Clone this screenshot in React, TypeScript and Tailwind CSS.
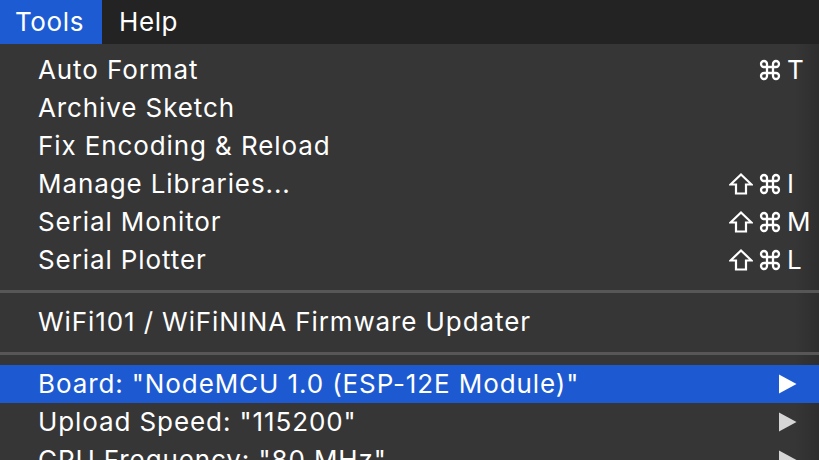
import React from 'react'
import { Command } from 'lucide-react'

type Item =
  | { kind: 'item'; label: string; shift?: boolean; cmd?: boolean; keyChar?: string; submenu?: boolean; active?: boolean }
  | { kind: 'sep' }

const items: Item[] = [
  { kind: 'item', label: 'Auto Format', cmd: true, keyChar: 'T' },
  { kind: 'item', label: 'Archive Sketch' },
  { kind: 'item', label: 'Fix Encoding & Reload' },
  { kind: 'item', label: 'Manage Libraries...', shift: true, cmd: true, keyChar: 'I' },
  { kind: 'item', label: 'Serial Monitor', shift: true, cmd: true, keyChar: 'M' },
  { kind: 'item', label: 'Serial Plotter', shift: true, cmd: true, keyChar: 'L' },
  { kind: 'sep' },
  { kind: 'item', label: 'WiFi101 / WiFiNINA Firmware Updater' },
  { kind: 'sep' },
  { kind: 'item', label: 'Board: "NodeMCU 1.0 (ESP-12E Module)"', submenu: true, active: true },
  { kind: 'item', label: 'Upload Speed: "115200"', submenu: true },
  { kind: 'item', label: 'CPU Frequency: "80 MHz"', submenu: true },
]

function Arrow({ active }: { active?: boolean }) {
  return (
    <svg width="18" height="20" viewBox="0 0 18 20" className="shrink-0">
      <polygon points="0,0.5 17.5,10 0,19.5" fill={active ? '#ffffff' : '#d6d6d6'} />
    </svg>
  )
}

function ShiftGlyph() {
  return (
    <svg width="24" height="22" viewBox="0 0 24 22" className="shrink-0">
      <polygon
        points="12,1.5 22.5,11.5 17,11.5 17,20.5 7,20.5 7,11.5 1.5,11.5"
        fill="none"
        stroke="currentColor"
        strokeWidth="2.2"
        strokeLinejoin="miter"
      />
    </svg>
  )
}

export default function App() {
  return (
    <div
      className="w-[819px] h-[460px] overflow-hidden bg-[#363636] text-white"
      style={{ fontFamily: 'Inter, "DejaVu Sans", sans-serif' }}
    >
      {/* Menu bar */}
      <div className="flex h-[44px] bg-[#232323] text-[26px] leading-none tracking-[0.6px]">
        <div className="flex items-center w-[102px] pl-[15px] bg-[#1c5bd1]">Tools</div>
        <div className="flex items-center pl-[17px]">Help</div>
      </div>

      {/* Dropdown */}
      <div className="pt-[7px] bg-gradient-to-r from-[#363636] from-[97%] to-[#2e2e2e]">
        {items.map((it, i) =>
          it.kind === 'sep' ? (
            <div key={i} className="h-[24px] flex items-center">
              <div className="w-full h-[3px] bg-[#575757]" />
            </div>
          ) : (
            <div
              key={i}
              className={`flex items-center h-[38px] pl-[38px] text-[26px] leading-none tracking-[0.9px] ${
                it.active ? 'bg-[#1d5ad1]' : ''
              }`}
            >
              <span className="flex-1 whitespace-nowrap">{it.label}</span>
              {it.keyChar && (
                <span className="flex items-center w-[90px]">
                  <span className="w-[29px] flex justify-start">{it.shift && <ShiftGlyph />}</span>
                  <span className="w-[29px] flex">
                    <Command size={24} strokeWidth={2.3} />
                  </span>
                  <span className="tracking-normal">{it.keyChar}</span>
                </span>
              )}
              {it.submenu && (
                <span className="w-[40px] flex justify-start">
                  <Arrow active={it.active} />
                </span>
              )}
            </div>
          )
        )}
      </div>
    </div>
  )
}
